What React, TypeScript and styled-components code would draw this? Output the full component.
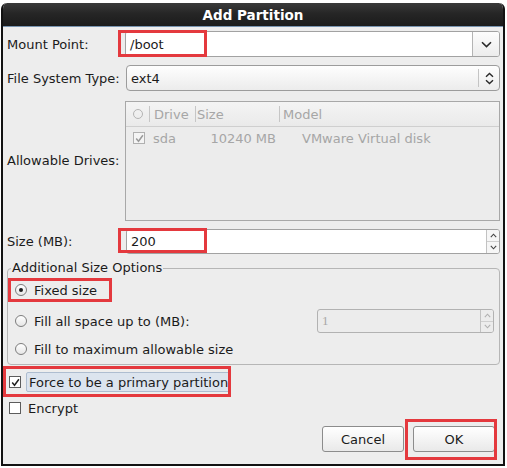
import React from "react";
import styled, { createGlobalStyle } from "styled-components";

const GlobalStyle = createGlobalStyle`
  html, body {
    margin: 0;
    padding: 0;
    background: #ffffff;
  }
  body {
    font-family: "DejaVu Sans", "Liberation Sans", sans-serif;
    font-size: 13px;
    color: #1b1b1b;
  }
`;

const RED = "#e4393e";

const Window = styled.div`
  margin: 3px 0 0 1px;
  width: 504px;
  height: 463px;
  box-sizing: border-box;
  border: 2px solid #121212;
  border-top: none;
  border-radius: 6px 6px 0 0;
  background: #ededed;
  display: flex;
  flex-direction: column;
  overflow: hidden;
`;

const TitleBar = styled.div`
  height: 24px;
  box-sizing: border-box;
  margin: 0 -2px;
  background: linear-gradient(#3a3a3a, #262626 45%, #1b1b1b);
  border-bottom: 1px solid #7894b0;
  border-radius: 6px 6px 0 0;
  color: #ffffff;
  font-weight: bold;
  font-size: 13.5px;
  display: flex;
  align-items: center;
  justify-content: center;
  padding-top: 1px;
`;

const Body = styled.div`
  flex: 1;
  display: flex;
  flex-direction: column;
  padding: 4px 3px 0 4px;
`;

const FormGrid = styled.div`
  display: grid;
  grid-template-columns: 118px 1fr;
  row-gap: 8px;
  align-items: center;
`;

const Label = styled.div`
  white-space: nowrap;
`;

const Field = styled.div<{ $h: number; $mt?: number }>`
  position: relative;
  height: ${(p) => p.$h}px;
  margin-top: ${(p) => p.$mt || 0}px;
  display: flex;
`;

const Mark = styled.div<{ $l: number; $t: number; $w: number; $h: number }>`
  position: absolute;
  left: ${(p) => p.$l}px;
  top: ${(p) => p.$t}px;
  width: ${(p) => p.$w}px;
  height: ${(p) => p.$h}px;
  box-sizing: border-box;
  border: 3px solid ${RED};
  pointer-events: none;
`;

const ComboEntry = styled.div`
  flex: 1;
  display: flex;
  border: 1px solid #a2a2a2;
  border-radius: 3px;
  background: #ffffff;
  overflow: hidden;
`;

const EntryText = styled.div<{ $disabled?: boolean }>`
  flex: 1;
  display: flex;
  align-items: center;
  padding-left: 4px;
  color: ${(p) => (p.$disabled ? "#a8a8a8" : "#1b1b1b")};
  font-family: ${(p) =>
    p.$disabled ? '"Liberation Serif", serif' : "inherit"};
`;

const ComboButton = styled.div`
  width: 26px;
  border-left: 1px solid #b4b4b4;
  background: linear-gradient(#fdfdfd, #ececec);
  display: flex;
  align-items: center;
  justify-content: center;
`;

const ComboBox = styled.div`
  flex: 1;
  margin-left: 1px;
  display: flex;
  border: 1px solid #9c9c9c;
  border-radius: 4px;
  background: linear-gradient(#fefefe, #ececec);
`;

const ComboSep = styled.div`
  width: 20px;
  margin: 3px 0;
  border-left: 1px solid #c4c4c4;
  display: flex;
  align-items: center;
  justify-content: center;
`;

const Tree = styled.div`
  flex: 1;
  border: 1px solid #a8a8a8;
  background: #ececec;
  display: flex;
  flex-direction: column;
  color: #a6a6a6;
`;

const TreeHeader = styled.div`
  height: 24px;
  display: flex;
  background: linear-gradient(#f4f4f4, #eaeaea);
  border-bottom: 1px solid #cfcfcf;
`;

const HeadCell = styled.div<{ $w?: number; $sep?: boolean; $pad?: number }>`
  ${(p) => (p.$w ? `width: ${p.$w}px;` : "flex: 1;")}
  display: flex;
  align-items: center;
  padding-left: ${(p) => p.$pad ?? 4}px;
  box-sizing: border-box;
  position: relative;
  ${(p) =>
    p.$sep
      ? `&::after {
    content: "";
    position: absolute;
    right: 0;
    top: 4px;
    bottom: 4px;
    border-right: 1px solid #c6c6c6;
  }`
      : ""}
`;

const HeadRadio = styled.span`
  width: 8px;
  height: 8px;
  border: 1px solid #b4b4b4;
  border-radius: 50%;
`;

const TreeRow = styled.div`
  height: 22px;
  display: flex;
  align-items: center;
`;

const Cell = styled.div<{ $w?: number; $pad?: number; $right?: boolean }>`
  ${(p) => (p.$w ? `width: ${p.$w}px;` : "flex: 1;")}
  box-sizing: border-box;
  padding-left: ${(p) => p.$pad ?? 0}px;
  padding-right: ${(p) => (p.$right ? 3 : 0)}px;
  white-space: nowrap;
  display: flex;
  justify-content: ${(p) => (p.$right ? "flex-end" : "flex-start")};
`;

const SpinEntry = styled.div<{ $disabled?: boolean }>`
  flex: 1;
  margin-left: 1px;
  display: flex;
  border: 1px solid ${(p) => (p.$disabled ? "#b2b2b2" : "#a2a2a2")};
  border-radius: 3px;
  background: ${(p) => (p.$disabled ? "#ececec" : "#ffffff")};
  overflow: hidden;
`;

const SpinButtons = styled.div<{ $disabled?: boolean }>`
  width: 12px;
  border-left: 1px solid #c2c2c2;
  display: flex;
  flex-direction: column;
  background: ${(p) => (p.$disabled ? "#ececec" : "#f6f6f6")};
`;

const SpinHalf = styled.div<{ $top?: boolean }>`
  flex: 1;
  display: flex;
  align-items: center;
  justify-content: center;
  ${(p) => (p.$top ? "border-bottom: 1px solid #cfcfcf;" : "")}
`;

const Frame = styled.fieldset`
  margin: 6px 0 0 0;
  padding: 0 5px 6px 3px;
  border: 1px solid #b6b6b6;
  border-radius: 4px;
  min-width: 0;
`;

const Legend = styled.legend`
  padding: 0 1px;
  line-height: 16px;
`;

const Options = styled.div`
  display: flex;
  flex-direction: column;
  padding: 5px 0 0 4px;
`;

const OptionRow = styled.div<{ $h: number; $mt?: number }>`
  position: relative;
  height: ${(p) => p.$h}px;
  margin-top: ${(p) => p.$mt || 0}px;
  display: flex;
  align-items: center;
`;

const Radio = styled.span<{ $checked?: boolean }>`
  width: 12px;
  height: 12px;
  box-sizing: border-box;
  border: 1px solid #7d7d7d;
  border-radius: 50%;
  background: linear-gradient(#ffffff, #e6e6e6);
  display: flex;
  align-items: center;
  justify-content: center;
  margin-right: 7px;
  &::after {
    content: "";
    width: 4px;
    height: 4px;
    border-radius: 50%;
    background: ${(p) => (p.$checked ? "#1e1e1e" : "transparent")};
  }
`;

const SmallSpin = styled.div`
  margin-left: auto;
  width: 178px;
  height: 24px;
  display: flex;
`;

const CheckRow = styled.div<{ $h: number; $mt: number }>`
  position: relative;
  height: ${(p) => p.$h}px;
  margin-top: ${(p) => p.$mt}px;
  padding-left: 2px;
  display: flex;
  align-items: center;
`;

const Check = styled.span<{ $gap?: number }>`
  width: 12px;
  height: 12px;
  box-sizing: border-box;
  border: 1px solid #5c5c5c;
  background: #ffffff;
  display: flex;
  align-items: center;
  justify-content: center;
  margin-right: ${(p) => p.$gap ?? 6}px;
`;

const DisabledCheck = styled(Check)`
  border-color: #b0b0b0;
  background: #f4f4f4;
  margin-right: 8px;
`;

const FocusLabel = styled.span`
  height: 20px;
  box-sizing: border-box;
  display: flex;
  align-items: center;
  padding: 0 1px 0 2px;
  margin-left: -1px;
  background: #dce4ee;
  border: 1px solid #aebdd0;
  border-radius: 2px;
`;

const ButtonRow = styled.div`
  position: relative;
  margin-top: 9px;
  padding-right: 5px;
  display: flex;
  justify-content: flex-end;
  gap: 9px;
`;

const ButtonWrap = styled.div`
  position: relative;
  display: flex;
`;

const Button = styled.div`
  width: 82px;
  height: 26px;
  box-sizing: border-box;
  border: 1px solid #8c8c8c;
  border-radius: 3px;
  background: linear-gradient(#ffffff, #e9e9e9);
  display: flex;
  align-items: center;
  justify-content: center;
`;

const CheckMark = ({ color = "#222" }: { color?: string }) => (
  <svg width="9" height="9" viewBox="0 0 9 9">
    <path d="M1.2 4.6 L3.5 7.2 L7.9 1.2" fill="none" stroke={color} strokeWidth="1.5" />
  </svg>
);

const Down = () => (
  <svg width="11" height="7" viewBox="0 0 11 7">
    <path d="M1 1.2 L5.5 5.6 L10 1.2" fill="none" stroke="#2a2a2a" strokeWidth="1.6" />
  </svg>
);

const UpDown = () => (
  <svg width="9" height="13" viewBox="0 0 9 13">
    <path d="M1 4.8 L4.5 1.4 L8 4.8" fill="none" stroke="#2a2a2a" strokeWidth="1.4" />
    <path d="M1 8.2 L4.5 11.6 L8 8.2" fill="none" stroke="#2a2a2a" strokeWidth="1.4" />
  </svg>
);

const Arrow = ({ up, color }: { up?: boolean; color: string }) => (
  <svg width="7" height="5" viewBox="0 0 7 5">
    <path
      d={up ? "M0.8 4.2 L3.5 1.2 L6.2 4.2" : "M0.8 0.8 L3.5 3.8 L6.2 0.8"}
      fill="none"
      stroke={color}
      strokeWidth="1.1"
    />
  </svg>
);

const Spin = ({ value, disabled }: { value: string; disabled?: boolean }) => {
  const c = disabled ? "#b0b0b0" : "#444";
  return (
    <SpinEntry $disabled={disabled}>
      <EntryText $disabled={disabled}>{value}</EntryText>
      <SpinButtons $disabled={disabled}>
        <SpinHalf $top>
          <Arrow up color={c} />
        </SpinHalf>
        <SpinHalf>
          <Arrow color={c} />
        </SpinHalf>
      </SpinButtons>
    </SpinEntry>
  );
};

export default function App() {
  return (
    <>
      <GlobalStyle />
      <Window>
        <TitleBar>Add Partition</TitleBar>
        <Body>
          <FormGrid>
            <Label>Mount Point:</Label>
            <Field $h={26}>
              <ComboEntry>
                <EntryText>/boot</EntryText>
                <ComboButton>
                  <Down />
                </ComboButton>
              </ComboEntry>
              <Mark $l={-7} $t={-1} $w={89} $h={27} />
            </Field>

            <Label>File System Type:</Label>
            <Field $h={26}>
              <ComboBox>
                <EntryText>ext4</EntryText>
                <ComboSep>
                  <UpDown />
                </ComboSep>
              </ComboBox>
            </Field>

            <Label>Allowable Drives:</Label>
            <Field $h={120} $mt={2}>
              <Tree>
                <TreeHeader>
                  <HeadCell $w={24} $sep $pad={7}>
                    <HeadRadio />
                  </HeadCell>
                  <HeadCell $w={46} $sep>
                    Drive
                  </HeadCell>
                  <HeadCell $w={84} $sep $pad={1}>
                    Size
                  </HeadCell>
                  <HeadCell $pad={3}>Model</HeadCell>
                </TreeHeader>
                <TreeRow>
                  <Cell $w={27} $pad={7}>
                    <DisabledCheck>
                      <CheckMark color="#9a9a9a" />
                    </DisabledCheck>
                  </Cell>
                  <Cell $w={57}>sda</Cell>
                  <Cell $w={69} $right>
                    10240 MB
                  </Cell>
                  <Cell $pad={23}>VMware Virtual disk</Cell>
                </TreeRow>
              </Tree>
            </Field>

            <Label>Size (MB):</Label>
            <Field $h={25}>
              <Spin value="200" />
              <Mark $l={-7} $t={-1} $w={89} $h={25} />
            </Field>
          </FormGrid>

          <Frame>
            <Legend>Additional Size Options</Legend>
            <Options>
              <OptionRow $h={18}>
                <Radio $checked />
                Fixed size
                <Mark $l={-7} $t={-3} $w={104} $h={24} />
              </OptionRow>
              <OptionRow $h={24} $mt={10}>
                <Radio />
                Fill all space up to (MB):
                <SmallSpin>
                  <Spin value="1" disabled />
                </SmallSpin>
              </OptionRow>
              <OptionRow $h={18} $mt={7}>
                <Radio />
                Fill to maximum allowable size
              </OptionRow>
            </Options>
          </Frame>

          <CheckRow $h={20} $mt={7}>
            <Check>
              <CheckMark />
            </Check>
            <FocusLabel>Force to be a primary partition</FocusLabel>
            <Mark $l={-4} $t={-6} $w={228} $h={31} />
          </CheckRow>
          <CheckRow $h={18} $mt={7}>
            <Check $gap={7} />
            Encrypt
          </CheckRow>

          <ButtonRow>
            <ButtonWrap>
              <Button>Cancel</Button>
            </ButtonWrap>
            <ButtonWrap>
              <Button>OK</Button>
              <Mark $l={-8} $t={-7} $w={92} $h={41} />
            </ButtonWrap>
          </ButtonRow>
        </Body>
      </Window>
    </>
  );
}
